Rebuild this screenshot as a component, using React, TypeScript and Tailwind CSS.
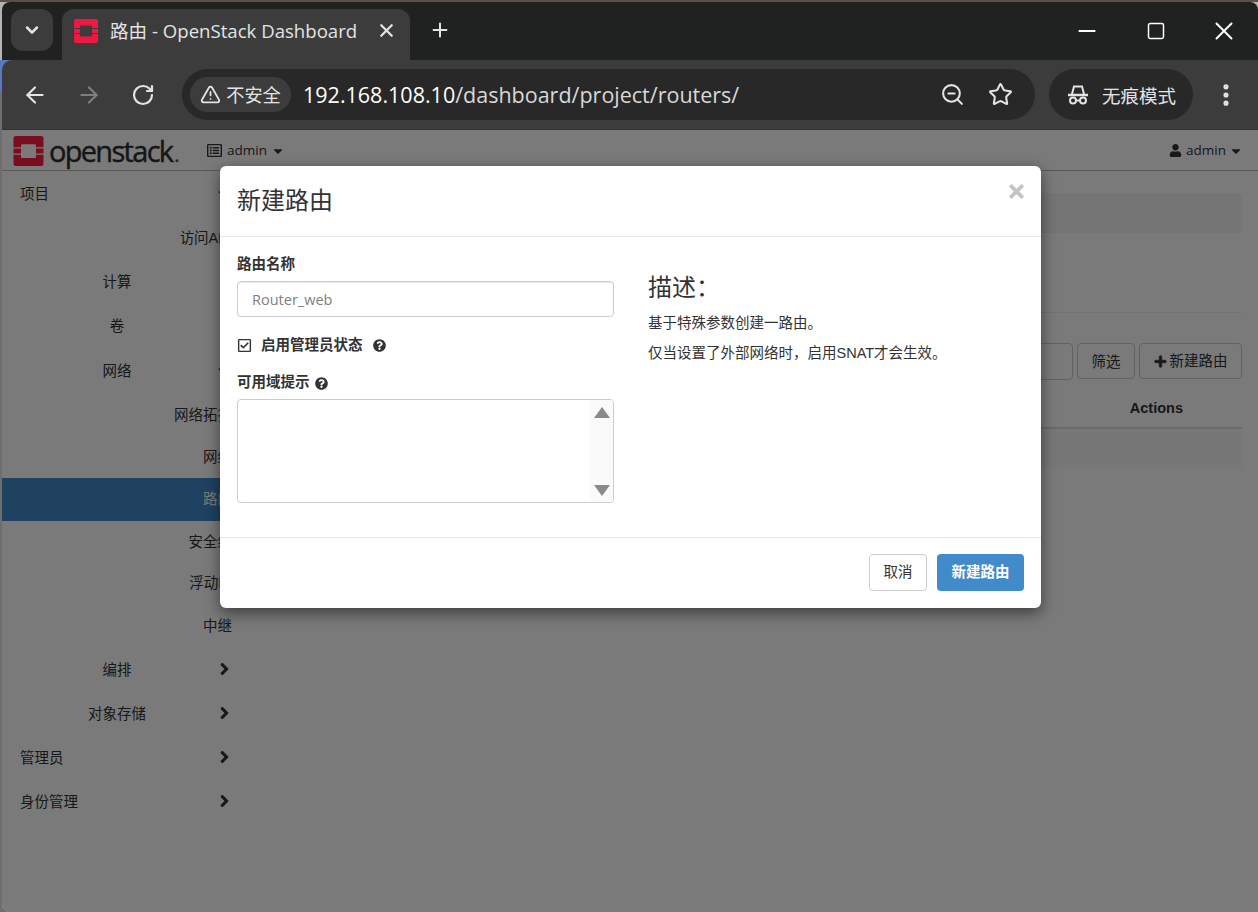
import React from "react";
import { ArrowLeft, ArrowRight, ChevronDown, Minus, MoreVertical, Plus, RotateCw, Square, Star, TriangleAlert, X, ZoomOut } from "lucide-react";
import { FaCaretDown, FaChevronRight, FaPlus, FaQuestionCircle, FaRegCheckSquare, FaRegListAlt, FaTimes, FaUser } from "react-icons/fa";

type NavItem = { label: string; h: string; align: string; chevron?: boolean; caret?: boolean; active?: boolean };

const navItems: NavItem[] = [
  { label: "项目", h: "h-[44px]", align: "justify-start pl-[18px]", caret: true },
  { label: "访问API", h: "h-[44px]", align: "justify-end" },
  { label: "计算", h: "h-[44px]", align: "justify-center" },
  { label: "卷", h: "h-[44px]", align: "justify-center" },
  { label: "网络", h: "h-[46px]", align: "justify-center", caret: true },
  { label: "网络拓扑", h: "h-[42px]", align: "justify-end" },
  { label: "网络", h: "h-[43px]", align: "justify-end" },
  { label: "路由", h: "h-[43px]", align: "justify-end", active: true },
  { label: "安全组", h: "h-[40px]", align: "justify-end" },
  { label: "浮动IP", h: "h-[42px]", align: "justify-end" },
  { label: "中继", h: "h-[44px]", align: "justify-end" },
  { label: "编排", h: "h-[44px]", align: "justify-center", chevron: true },
  { label: "对象存储", h: "h-[44px]", align: "justify-center", chevron: true },
  { label: "管理员", h: "h-[44px]", align: "justify-start pl-[18px]", chevron: true },
  { label: "身份管理", h: "h-[44px]", align: "justify-start pl-[18px]", chevron: true },
];

const OpenStackMark = ({ className, color }: { className: string; color: string }) => (
  <svg viewBox="0 0 24 24" className={className}>
    <path
      fill={color}
      d="M2 0h20a2 2 0 0 1 2 2v7h-6V7.5a1 1 0 0 0-1-1H7a1 1 0 0 0-1 1V9H0V2a2 2 0 0 1 2-2zM0 10h6v4H0zM18 10h6v4h-6zM0 15h6v1.5a1 1 0 0 0 1 1h10a1 1 0 0 0 1-1V15h6v7a2 2 0 0 1-2 2H2a2 2 0 0 1-2-2z"
    />
  </svg>
);

const IncognitoIcon = () => (
  <svg viewBox="0 0 22 20" className="h-[20px] w-[22px] text-[#e3e3e3]" fill="none" stroke="currentColor" strokeWidth="2">
    <path d="M5 9l2-7.5h8l2 7.5" />
    <path d="M1 10h20" strokeWidth="2.4" />
    <circle cx="6" cy="15.5" r="3" />
    <circle cx="16" cy="15.5" r="3" />
    <path d="M9 15.5h4" />
  </svg>
);

const Sidebar = () => (
  <div className="w-[230px] shrink-0 text-[14.5px] text-[#333]">
    {navItems.map((item, i) => (
      <div
        key={i}
        className={`relative flex items-center ${item.h} ${item.align} ${item.active ? "bg-[#428bca] text-white" : "pt-[3px]"}`}
      >
        <span>{item.label}</span>
        {item.chevron && (
          <FaChevronRight stroke="currentColor" strokeWidth={40} className="absolute right-[1px] top-1/2 h-[13px] w-[13px] -translate-y-1/2" />
        )}
        {item.caret && <FaCaretDown className="absolute right-[4px] top-1/2 h-[12px] w-[12px] -translate-y-1/2" />}
      </div>
    ))}
  </div>
);

const RouterDialog = () => (
  <div className="absolute left-[220px] top-[166px] flex h-[442px] w-[821px] flex-col rounded-[6px] bg-white text-[#333] shadow-[0_5px_15px_rgba(0,0,0,0.5)]">
    <div className="relative flex h-[71px] shrink-0 items-center border-b border-[#e5e5e5] px-[17px]">
      <h4 className="text-[24px] leading-none">新建路由</h4>
      <FaTimes className="absolute right-[14px] top-[15px] h-[21px] w-[21px] text-[#c4c4c4]" />
    </div>

    <div className="flex flex-1 px-[17px]">
      <div className="w-[377px] shrink-0 pt-[17px]">
        <label className="block text-[14.5px] font-bold leading-[20px]">路由名称</label>
        <div className="mt-[7px] flex h-[36px] items-center rounded-[4px] border border-[#ccc] px-[14px] pt-[2px] font-['Open_Sans',sans-serif] text-[14.5px] text-[#808080] shadow-[inset_0_1px_1px_rgba(0,0,0,0.075)]">
          Router_web
        </div>
        <div className="mt-[18px] flex h-[20px] items-center">
          <FaRegCheckSquare className="h-[15px] w-[15px] text-[#333]" />
          <span className="ml-[9px] mt-[1px] text-[14.5px] font-bold">启用管理员状态</span>
          <FaQuestionCircle className="ml-[10px] h-[13px] w-[13px]" />
        </div>
        <div className="mt-[18px] flex h-[20px] items-center">
          <span className="text-[14.5px] font-bold">可用域提示</span>
          <FaQuestionCircle className="ml-[5px] h-[13px] w-[13px]" />
        </div>
        <div className="mt-[6px] flex h-[104px] justify-end overflow-hidden rounded-[4px] border border-[#ccc]">
          <div className="flex w-[23px] flex-col items-center justify-between bg-[#fafafa] pb-[6px] pt-[7px]">
            <span className="h-0 w-0 border-x-[8px] border-b-[11px] border-x-transparent border-b-[#8a8a8a]" />
            <span className="h-0 w-0 border-x-[8px] border-t-[11px] border-x-transparent border-t-[#8a8a8a]" />
          </div>
        </div>
      </div>

      <div className="ml-[34px] flex-1 pt-[33px]">
        <h3 className="text-[24px] leading-[36px]">{"描述\uFF1A"}</h3>
        <p className="mt-[7px] text-[14.5px] leading-[20px]">基于特殊参数创建一路由。</p>
        <p className="mt-[10px] text-[14.5px] leading-[20px]">{"仅当设置了外部网络时\uFF0C启用SNAT才会生效。"}</p>
      </div>
    </div>

    <div className="flex h-[71px] shrink-0 items-center justify-end gap-[10px] border-t border-[#e5e5e5] px-[17px] pb-[1px]">
      <button className="h-[37px] w-[58px] rounded-[4px] border border-[#ccc] bg-white text-[14.5px] text-[#333]">取消</button>
      <button className="h-[37px] w-[87px] rounded-[4px] bg-[#428bca] text-[14.5px] font-bold text-white">新建路由</button>
    </div>
  </div>
);

export default function App() {
  return (
    <div className="relative h-[912px] w-[1258px] overflow-hidden bg-[linear-gradient(to_bottom,#5b5048_0,#5b5048_2px,#b4b4b4_2px,#b4b4b4_60px,#5a78c0_60px,#5a78c0_92px,#6e6e6e_92px)] pl-[2px] pt-[2px] font-['Liberation_Sans','Noto_Sans_CJK_SC',sans-serif]">
      <div className="flex h-[910px] flex-col overflow-hidden rounded-t-[8px] rounded-bl-[8px]">
        {/* title bar */}
        <div className="flex h-[58px] shrink-0 items-end bg-[#202221] text-[#e3e3e3]">
          <div className="mb-[9px] ml-[9px] flex h-[42px] w-[42px] items-center justify-center rounded-[12px] bg-[#3c3c3c]">
            <ChevronDown className="h-[20px] w-[20px]" strokeWidth={3} />
          </div>
          <div className="ml-[9px] flex h-[51px] w-[348px] items-center rounded-t-[12px] bg-[#3c3c3c] pb-[8px] pl-[12px] font-['Open_Sans','Noto_Sans_CJK_SC',sans-serif]">
            <OpenStackMark className="h-[24px] w-[24px]" color="#ed1944" />
            <span className="ml-[12px] w-[265.5px] whitespace-nowrap text-[18.6px]">路由 - OpenStack Dashboard</span>
            <X className="h-[21px] w-[21px]" strokeWidth={2.6} />
          </div>
          <div className="mb-[19px] ml-[19px] flex items-center">
            <Plus className="h-[22px] w-[22px]" strokeWidth={2.2} />
          </div>
          <div className="mb-[13px] ml-auto flex items-center text-white">
            <div className="flex h-[32px] w-[69px] items-center justify-center">
              <Minus className="h-[26px] w-[26px]" strokeWidth={1.8} />
            </div>
            <div className="flex h-[32px] w-[69px] items-center justify-center">
              <Square className="h-[20px] w-[20px]" strokeWidth={1.8} />
            </div>
            <div className="flex h-[32px] w-[68px] items-center justify-center">
              <X className="h-[30px] w-[30px]" strokeWidth={1.6} />
            </div>
          </div>
        </div>

        {/* toolbar */}
        <div className="flex h-[70px] shrink-0 items-center rounded-tl-[10px] border-b border-[#333] bg-[#3c3c3c] text-[#e3e3e3]">
          <div className="ml-[20px] flex items-center gap-[28px]">
            <ArrowLeft className="h-[26px] w-[26px]" strokeWidth={2} />
            <ArrowRight className="h-[26px] w-[26px] text-[#7e7e7e]" strokeWidth={2} />
            <RotateCw className="ml-[1px] h-[24px] w-[24px]" strokeWidth={2.2} />
          </div>
          <div className="ml-[27px] flex h-[51px] w-[853px] items-center rounded-full bg-[#282828] pl-[8px] pr-[22px]">
            <div className="flex h-[35px] w-[101px] items-center justify-center gap-[5px] rounded-full bg-[#3c3c3c]">
              <TriangleAlert className="h-[21px] w-[21px]" strokeWidth={2} />
              <span className="mt-[5px] text-[18.2px]">不安全</span>
            </div>
            <span className="ml-[12px] mt-[1px] font-['Open_Sans',sans-serif] text-[21.5px] text-[#d8d8d8]">
              <span className="text-white">192.168.108.10</span>/dashboard/project/routers/
            </span>
            <ZoomOut className="ml-auto h-[25px] w-[25px]" strokeWidth={2} />
            <Star className="ml-[23px] h-[25px] w-[25px]" strokeWidth={2} />
          </div>
          <div className="ml-[14px] flex h-[51px] w-[144px] items-center rounded-full bg-[#282828] pl-[18px]">
            <IncognitoIcon />
            <span className="ml-[13px] mt-[5px] text-[18.5px]">无痕模式</span>
          </div>
          <MoreVertical className="ml-[19px] h-[28px] w-[28px]" strokeWidth={2.4} />
        </div>

        {/* dashboard page */}
        <div className="flex min-h-0 flex-1 flex-col bg-white text-[#333]">
          <div className="flex h-[41px] shrink-0 items-center border-b border-[#bbb] pl-[11px] pr-[15px] pt-[1px]">
            <OpenStackMark className="h-[30px] w-[31px]" color="#ff1f3f" />
            <span className="ml-[5px] flex w-[129px] items-baseline whitespace-nowrap font-['Open_Sans',sans-serif] text-[29px] leading-none tracking-[-1.7px] text-[#2e2e2e] [-webkit-text-stroke:0.4px_#2e2e2e]">
              openstack
              <span className="ml-[2px] text-[20px] tracking-normal text-[#555]">.</span>
            </span>
            <FaRegListAlt className="ml-[29px] h-[15px] w-[15px]" />
            <span className="ml-[5px] font-['Open_Sans',sans-serif] text-[13.5px]">admin</span>
            <FaCaretDown className="ml-[4px] h-[14px] w-[14px]" />
            <FaUser className="ml-auto h-[13px] w-[13px]" />
            <span className="ml-[4px] font-['Open_Sans',sans-serif] text-[13.5px]">admin</span>
            <FaCaretDown className="ml-[3px] h-[14px] w-[14px]" />
          </div>

          <div className="flex min-h-0 flex-1">
            <Sidebar />
            <div className="flex-1 pl-[16px] pr-[16px] pt-[22px]">
              <div className="h-[40px] rounded-[4px] bg-[#f5f5f5]" />
              <div className="mt-[79px] h-px bg-[#eee]" />
              <div className="mt-[30px] flex justify-end gap-[4px] text-[14.5px]">
                <div className="h-[37px] w-[200px] rounded-[4px] border border-[#ccc]" />
                <div className="flex h-[36px] w-[58px] items-center justify-center rounded-[4px] border border-[#ccc] pt-[3px]">筛选</div>
                <div className="flex h-[36px] w-[103px] items-center justify-center gap-[3px] rounded-[4px] border border-[#ccc]">
                  <FaPlus stroke="currentColor" strokeWidth={30} className="h-[13px] w-[13px]" />
                  <span className="mt-[2px]">新建路由</span>
                </div>
              </div>
              <div className="flex h-[49px] items-end justify-end border-b-2 border-[#ddd] pb-[7px] pr-[59px] text-[14.5px] font-bold">Actions</div>
              <div className="h-[39px] bg-[#f9f9f9]" />
            </div>
          </div>
        </div>
      </div>

      {/* modal backdrop */}
      <div className="absolute bottom-0 left-[2px] right-0 top-[130px] rounded-bl-[8px] bg-black/[0.52]" />
      <RouterDialog />
    </div>
  );
}
